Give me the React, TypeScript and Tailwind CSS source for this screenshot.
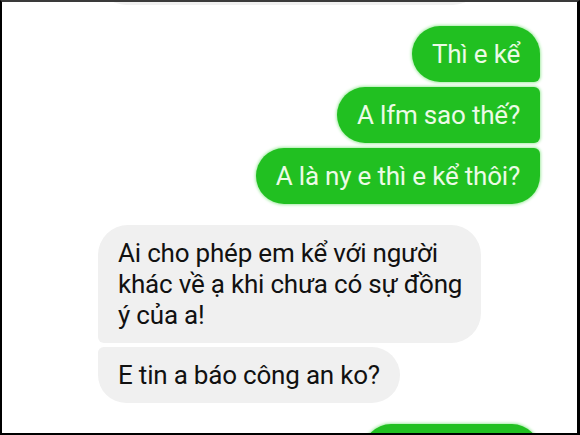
const font = { fontFamily: 'Roboto, "Noto Sans", sans-serif' }

const sent = [
  { text: 'Thì e kể', radius: 'rounded-[28px] rounded-br-[6px]' },
  { text: 'A lfm sao thế?', radius: 'rounded-l-[28px] rounded-r-[6px]' },
  { text: 'A là ny e thì e kể thôi?', radius: 'rounded-[28px] rounded-tr-[6px]' },
]

export default function App() {
  return (
    <div
      className="w-[580px] h-[435px] overflow-hidden bg-white border-l-2 border-r-[3px] border-b-2 border-t-2 border-l-black border-r-black border-b-black border-t-[#3a3a3a]"
      style={font}
    >
      <div className="flex flex-col pl-[96px] pr-[37px]">
        {/* previous incoming bubble, cut off at the top */}
        <div className="-mt-[53px] h-[56px] w-[383px] rounded-[28px] bg-[#f0f0f0]" />

        <div className="mt-[21px] flex flex-col items-end gap-[5px]">
          {sent.map((m) => (
            <div
              key={m.text}
              className={`bg-[#21c021] text-[#ecfbe6] text-[26px] leading-[31px] tracking-[-0.2px] px-5 py-[12.5px] shadow-[0_0_3px_1px_#a6eca6] ${m.radius}`}
            >
              {m.text}
            </div>
          ))}
        </div>

        <div className="mt-[21px] flex flex-col items-start gap-[4px]">
          <div className="w-[383px] bg-[#f0f0f0] text-[#111] text-[26px] leading-[31px] tracking-[-0.2px] pl-5 pr-1 py-[12.5px] rounded-[30px] rounded-bl-[6px]">
            Ai cho phép em kể với người khác về ạ khi chưa có sự đồng ý của a!
          </div>
          <div className="bg-[#f0f0f0] text-[#111] text-[26px] leading-[31px] tracking-[-0.2px] px-5 py-[12.5px] rounded-[30px] rounded-tl-[6px]">
            E tin a báo công an ko?
          </div>
        </div>

        <div className="mt-[21px] flex justify-end">
          <div className="w-[177px] h-[56px] bg-[#21c021] rounded-[28px] shadow-[0_0_3px_1px_#a6eca6]" />
        </div>
      </div>
    </div>
  )
}
